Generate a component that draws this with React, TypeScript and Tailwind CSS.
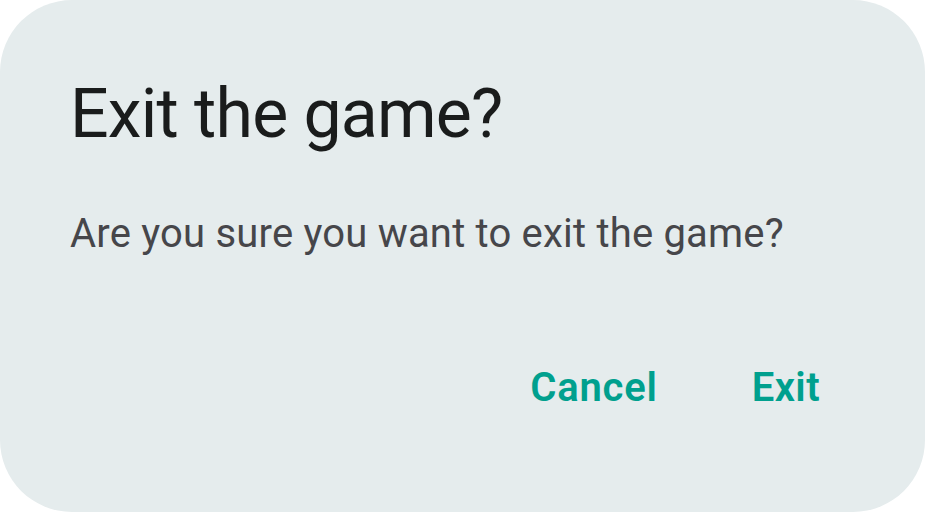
export default function App() {
  return (
    <div className="w-[925px] h-[512px] bg-white">
      <div className="w-full h-full bg-[#e5eced] rounded-[72px] flex flex-col pl-[70px] pr-[105px] pt-[80px] font-['Roboto',sans-serif]">
        {/* Title */}
        <h1 className="text-[68px] leading-[68px] tracking-[-0.8px] text-[#1a1c1c] font-normal">
          Exit the game?
        </h1>

        {/* Message */}
        <p className="mt-[66px] text-[40px] leading-[40px] tracking-[0.2px] text-[#46464a]">
          Are you sure you want to exit the game?
        </p>

        {/* Actions */}
        <div className="mt-[114px] flex justify-end gap-[94px]">
          <button type="button" className="text-[40px] leading-[40px] tracking-[0.8px] font-semibold text-[#00a08e]">
            Cancel
          </button>
          <button type="button" className="text-[40px] leading-[40px] tracking-[0.4px] font-semibold text-[#00a08e]">
            Exit
          </button>
        </div>
      </div>
    </div>
  );
}
